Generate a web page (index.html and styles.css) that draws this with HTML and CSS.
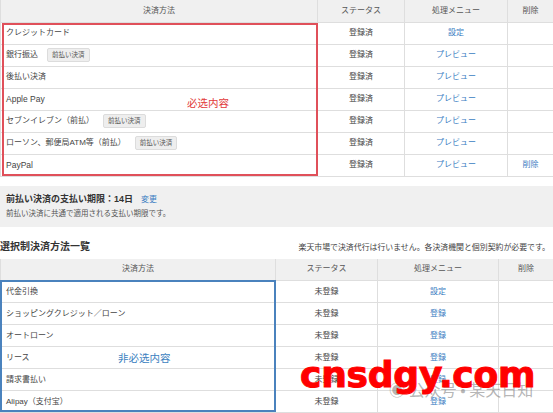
FILE: index.html
```html
<!DOCTYPE html>
<html lang="ja">

<head>
  <meta charset="UTF-8" />
  <meta name="viewport" content="width=device-width, initial-scale=1.0" />
  <title>決済方法</title>
  <link rel="stylesheet" href="styles.css">
</head>

<body>
  <div class="block">
    <table class="list list-main">
      <colgroup>
        <col class="c1a" />
        <col class="c2a" />
        <col class="c3a" />
        <col class="c4a" />
      </colgroup>
      <tr>
        <th>決済方法</th>
        <th>ステータス</th>
        <th>処理メニュー</th>
        <th>削除</th>
      </tr>
      <tr>
        <td class="name">クレジットカード</td>
        <td>登録済</td>
        <td><a class="link">設定</a></td>
        <td></td>
      </tr>
      <tr>
        <td class="name">銀行振込<span class="tag">前払い決済</span></td>
        <td>登録済</td>
        <td><a class="link">プレビュー</a></td>
        <td></td>
      </tr>
      <tr>
        <td class="name">後払い決済</td>
        <td>登録済</td>
        <td><a class="link">プレビュー</a></td>
        <td></td>
      </tr>
      <tr>
        <td class="name latin">Apple Pay</td>
        <td>登録済</td>
        <td><a class="link">プレビュー</a></td>
        <td></td>
      </tr>
      <tr>
        <td class="name">セブンイレブン（前払）<span class="tag">前払い決済</span></td>
        <td>登録済</td>
        <td><a class="link">プレビュー</a></td>
        <td></td>
      </tr>
      <tr>
        <td class="name">ローソン、郵便局ATM等（前払）<span class="tag">前払い決済</span></td>
        <td>登録済</td>
        <td><a class="link">プレビュー</a></td>
        <td></td>
      </tr>
      <tr>
        <td class="name latin">PayPal</td>
        <td>登録済</td>
        <td><a class="link">プレビュー</a></td>
        <td><a class="link">削除</a></td>
      </tr>
    </table>
    <div class="mark mark-red"></div>
    <span class="note note-red">必选内容</span>
  </div>

  <div class="limit">
    <p class="limit-title">前払い決済の支払い期限：14日<a class="link change">変更</a></p>
    <p class="limit-text">前払い決済に共通で適用される支払い期限です。</p>
  </div>

  <div class="heading">
    <h2>選択制決済方法一覧</h2>
    <span class="heading-note">楽天市場で決済代行は行いません。各決済機関と個別契約が必要です。</span>
  </div>

  <div class="block">
    <table class="list list-sub">
      <colgroup>
        <col class="c1b" />
        <col class="c2b" />
        <col class="c3b" />
        <col class="c4b" />
      </colgroup>
      <tr>
        <th>決済方法</th>
        <th>ステータス</th>
        <th>処理メニュー</th>
        <th>削除</th>
      </tr>
      <tr>
        <td class="name">代金引換</td>
        <td>未登録</td>
        <td><a class="link">設定</a></td>
        <td></td>
      </tr>
      <tr>
        <td class="name">ショッピングクレジット／ローン</td>
        <td>未登録</td>
        <td><a class="link">登録</a></td>
        <td></td>
      </tr>
      <tr>
        <td class="name">オートローン</td>
        <td>未登録</td>
        <td><a class="link">登録</a></td>
        <td></td>
      </tr>
      <tr>
        <td class="name">リース</td>
        <td>未登録</td>
        <td><a class="link">登録</a></td>
        <td></td>
      </tr>
      <tr>
        <td class="name">請求書払い</td>
        <td>未登録</td>
        <td><a class="link">登録</a></td>
        <td></td>
      </tr>
      <tr>
        <td class="name">Alipay（支付宝）</td>
        <td>未登録</td>
        <td><a class="link">登録</a></td>
        <td></td>
      </tr>
    </table>
    <div class="mark mark-blue"></div>
    <span class="note note-blue">非必选内容</span>
    <span class="wm-sub">&#9673; 公众号 · 某天日知</span>
    <span class="wm">cnsdgy.com</span>
  </div>
</body>

</html>
```

FILE: styles.css
```css
* {
  margin: 0;
  padding: 0;
  box-sizing: border-box;
}

html,
body {
  width: 553px;
  height: 413px;
  overflow: hidden;
}

body {
  font-family: "Liberation Sans", "Noto Sans CJK JP", sans-serif;
  font-size: 8px;
  color: #444;
  background-color: #fff;
}

.block {
  position: relative;
}

.list {
  width: 553px;
  table-layout: fixed;
  border-collapse: collapse;
}

.c1a { width: 317px; }
.c2a { width: 87px; }
.c3a { width: 103px; }
.c4a { width: 46px; }

.c1b { width: 275px; }
.c2b { width: 102px; }
.c3b { width: 121px; }
.c4b { width: 55px; }

.list th,
.list td {
  height: 22px;
  border: 1px solid #dedede;
  text-align: center;
  font-weight: normal;
  white-space: nowrap;
  line-height: 12px;
}

.list tr:first-child th {
  border-top: none;
}

.list th {
  background-color: #f0f0f0;
  color: #555;
}

.list td.name {
  text-align: left;
  padding-left: 5px;
}

.list td.latin {
  font-size: 8.5px;
}

.link {
  color: #3a7dc2;
}

.tag {
  display: inline-block;
  margin-left: 9px;
  padding: 0 4px;
  height: 14px;
  line-height: 12px;
  font-size: 6.5px;
  color: #555;
  background-color: #eee;
  border: 1px solid #dcdcdc;
  border-radius: 2px;
  vertical-align: middle;
}

.mark {
  position: absolute;
  pointer-events: none;
}

.mark-red {
  left: 2px;
  top: 23px;
  width: 316px;
  height: 153px;
  border: 2px solid #e0505a;
}

.mark-blue {
  left: 0;
  top: 21px;
  width: 276px;
  height: 132px;
  border: 2px solid #4a82bd;
}

.note {
  position: absolute;
  font-size: 10.5px;
  font-family: "Noto Sans CJK SC", sans-serif;
  line-height: 14px;
}

.note-red {
  left: 187px;
  top: 96px;
  color: #e23a3a;
}

.note-blue {
  left: 118px;
  top: 92px;
  color: #3c7fc0;
}

.limit {
  margin-top: 9px;
  height: 41px;
  padding: 7px 6px 0;
  background-color: #f0f0f0;
}

.limit-title {
  font-size: 9px;
  font-weight: bold;
  color: #333;
  line-height: 13px;
}

.change {
  font-weight: normal;
  font-size: 8px;
  margin-left: 8px;
}

.limit-text {
  margin-top: 2px;
  font-size: 7.5px;
  line-height: 11px;
  color: #555;
}

.heading {
  height: 32px;
  display: flex;
  justify-content: space-between;
  align-items: flex-end;
  padding: 0 3px 5px 0;
}

.heading h2 {
  font-size: 10px;
  line-height: 14px;
  color: #333;
}

.heading-note {
  font-size: 7.9px;
  line-height: 12px;
  color: #444;
}

.wm {
  position: absolute;
  left: 300px;
  top: 96px;
  font-family: "DejaVu Sans", sans-serif;
  font-weight: bold;
  font-size: 36px;
  letter-spacing: -0.2px;
  line-height: 40px;
  color: #f00;
  -webkit-text-stroke: 1px #f00;
}

.wm-sub {
  position: absolute;
  left: 389px;
  top: 120px;
  font-family: "Noto Sans CJK SC", sans-serif;
  font-size: 16px;
  line-height: 20px;
  color: rgba(120, 120, 120, 0.55);
  white-space: nowrap;
}
```
